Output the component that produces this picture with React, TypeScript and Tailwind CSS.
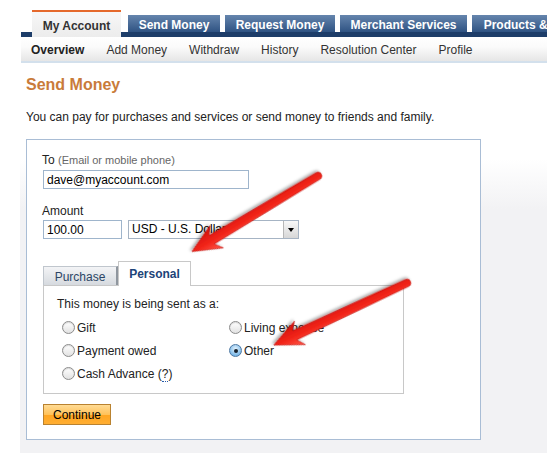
import React from 'react'

const TOP_TABS = [
  { label: 'Send Money', w: 'w-[92px]' },
  { label: 'Request Money', w: 'w-[110px]' },
  { label: 'Merchant Services', w: 'w-[127px]' },
  { label: 'Products & Services', w: 'w-[140px]' },
]

const SUB_NAV = ['Overview', 'Add Money', 'Withdraw', 'History', 'Resolution Center', 'Profile']

function Radio({ checked = false }: { checked?: boolean }) {
  return checked ? (
    <span className="flex items-center justify-center w-[13px] h-[13px] rounded-full border border-[#4d78a3] bg-[radial-gradient(circle_at_50%_35%,#e3f2fd,#7fbbe9_70%,#4f98d6)] shrink-0">
      <span className="w-[4px] h-[4px] rounded-full bg-[#16222e]" />
    </span>
  ) : (
    <span className="w-[13px] h-[13px] rounded-full border border-[#8c8c8c] bg-[linear-gradient(#ffffff,#e2e2e2)] shadow-[inset_0_1px_1px_rgba(0,0,0,.15)] shrink-0" />
  )
}

function RadioItem({ label, checked, children }: { label: string; checked?: boolean; children?: React.ReactNode }) {
  return (
    <div className="flex items-center gap-[2px] h-[23px]">
      <Radio checked={checked} />
      <span className="text-[12px] text-[#222]">
        {label}
        {children}
      </span>
    </div>
  )
}

function Arrow({ x, y, angle }: { x: number; y: number; angle: number }) {
  return (
    <g transform={`translate(${x},${y}) rotate(${angle})`} filter="url(#shadow)">
      <path
        d="M0,-3.8 L124,-5 L118,-13 L147,0 L118,13 L124,5 L0,3.8 A3.8,3.8 0 0 1 0,-3.8 Z"
        fill="url(#redgrad)"
        stroke="#c10f0a"
        strokeWidth="0.6"
        strokeLinejoin="round"
      />
    </g>
  )
}

export default function App() {
  return (
    <div className="relative w-[547px] h-[465px] overflow-hidden bg-white font-['Liberation_Sans',Arial,sans-serif] text-[#222]">
      {/* top tabs */}
      <div className="ml-[21px] mt-[10px] h-[27px] flex items-end pl-[11px] bg-[linear-gradient(to_bottom,transparent_22px,#1d3d69_22px)] whitespace-nowrap">
        <div className="w-[89px] h-[27px] shrink-0 border-t-2 border-[#e5692c] bg-[linear-gradient(#f7f7f7,#ececec)] flex items-center justify-center pt-[3px] text-[12px] font-bold text-[#333]">
          My Account
        </div>
        <div className="flex items-end gap-[5px] ml-[7px] mb-[5px]">
          {TOP_TABS.map((t) => (
            <div
              key={t.label}
              className={`${t.w} h-[17px] shrink-0 bg-[linear-gradient(#6585ad,#2f5383)] flex items-center justify-center pt-[3px] text-[12px] font-bold text-white`}
            >
              {t.label}
            </div>
          ))}
        </div>
      </div>

      {/* sub navigation */}
      <div className="ml-[21px] h-[26px] flex items-center gap-[22px] pl-[10px] pt-[2px] bg-[linear-gradient(#ffffff,#fbfbfb_40%,#e6e6e6)] border-b-2 border-[#d3e0ec] text-[12px] text-[#333] whitespace-nowrap">
        {SUB_NAV.map((item, i) => (
          <span key={item} className={i === 0 ? 'font-bold text-[#222]' : ''}>
            {item}
          </span>
        ))}
      </div>

      {/* content */}
      <div className="ml-[20px]">
        <h1 className="ml-[6px] mt-[13px] text-[16px] leading-[18px] font-bold text-[#c97b3a]">Send Money</h1>
        <p className="ml-[6px] mt-[16px] text-[12px] leading-[14px] text-[#222]">
          You can pay for purchases and services or send money to friends and family.
        </p>

        <div className="mt-[15px] pl-[6px] pb-[13px] bg-[linear-gradient(to_bottom,#ffffff_0px,#ffffff_20px,#f2f2f4_70px,#f2f2f4)]">
          <div className="w-[455px] h-[301px] border border-[#a9bdd5] bg-white pt-[13px] pl-[15px]">
            <div className="text-[12px] leading-[14px]">
              To <span className="text-[11px] text-[#666]">(Email or mobile phone)</span>
            </div>
            <input
              readOnly
              defaultValue="dave@myaccount.com"
              className="mt-[3px] ml-px block w-[206px] h-[19px] border border-[#9fb5cc] px-[3px] text-[12px] text-black outline-none"
            />

            <div className="mt-[15px] text-[12px] leading-[14px]">Amount</div>
            <div className="mt-[2px] ml-px flex gap-[6px]">
              <input
                readOnly
                defaultValue="100.00"
                className="block w-[79px] h-[19px] border border-[#9fb5cc] px-[3px] text-[12px] text-black outline-none"
              />
              <div className="relative w-[171px] h-[19px] border border-[#a6b4c4] bg-white pl-[3px] text-[12px] leading-[17px] text-black overflow-hidden whitespace-nowrap">
                USD - U.S. Dollars
                <div className="absolute right-0 top-0 w-[15px] h-[17px] border-l border-[#b7b7b7] bg-[linear-gradient(#f8f8f8,#d7d7d7)] flex items-center justify-center">
                  <span className="w-0 h-0 border-l-[3.5px] border-r-[3.5px] border-t-[4px] border-l-transparent border-r-transparent border-t-black" />
                </div>
              </div>
            </div>

            {/* purpose tabs */}
            <div className="mt-[22px] ml-px flex items-end">
              <div className="w-[75px] h-[19px] border border-[#c0c6cd] border-r-[#8f969e] border-r-2 border-b-0 bg-[linear-gradient(#f3f4f6,#d6dadf)] flex items-center justify-center pt-px text-[12px] text-[#2c4565]">
                Purchase
              </div>
              <div className="relative z-10 -mb-px w-[73px] h-[25px] border border-[#c8c8c8] border-b-0 bg-white flex items-center justify-center text-[12px] font-bold text-[#1c4478]">
                Personal
              </div>
            </div>
            <div className="ml-px w-[361px] h-[109px] border border-[#c8c8c8] pt-[11px] pl-[13px]">
              <div className="text-[12px] leading-[14px] text-[#222]">This money is being sent as a:</div>
              <div className="mt-[5px] ml-[5px] grid grid-cols-[167px_1fr]">
                <RadioItem label="Gift" />
                <RadioItem label="Living expense" />
                <RadioItem label="Payment owed" />
                <RadioItem label="Other" checked />
                <RadioItem label="Cash Advance (">
                  <span className="border-b border-dotted border-[#2a5aa8]">?</span>)
                </RadioItem>
              </div>
            </div>

            <button className="mt-[10px] ml-px w-[68px] h-[21px] border border-[#b98230] bg-[linear-gradient(#ffdb94,#ffc25a_50%,#ffa622_55%,#ffae33)] text-[12px] text-black">
              Continue
            </button>
          </div>
        </div>
      </div>

      {/* annotation arrows */}
      <svg className="absolute top-0 left-0 pointer-events-none" width="547" height="465">
        <defs>
          <linearGradient id="redgrad" x1="0" y1="0" x2="0" y2="1">
            <stop offset="0" stopColor="#ff5a4a" />
            <stop offset="0.45" stopColor="#f2241a" />
            <stop offset="1" stopColor="#d01008" />
          </linearGradient>
          <filter id="shadow" x="-20%" y="-20%" width="140%" height="140%">
            <feDropShadow dx="1" dy="2" stdDeviation="1.6" floodColor="#000" floodOpacity="0.35" />
          </filter>
        </defs>
        <Arrow x={318} y={176} angle={149.04} />
        <Arrow x={407} y={283} angle={155} />
      </svg>
    </div>
  )
}
